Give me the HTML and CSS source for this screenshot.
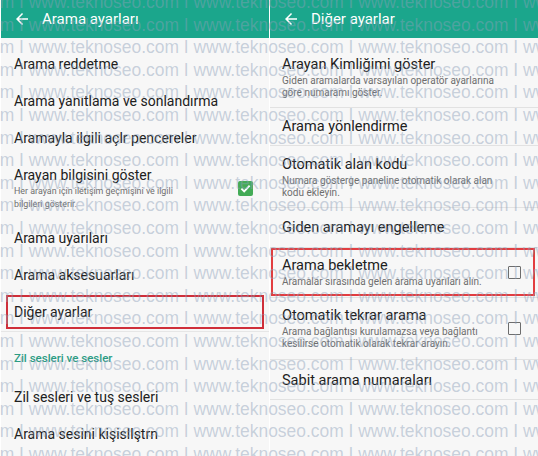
FILE: index.html
```html
<!DOCTYPE html>
<html lang="tr">
<head>
    <meta charset="UTF-8">
    <meta name="viewport" content="width=device-width, initial-scale=1.0">
    <title>Arama ayarları</title>
    <link rel="stylesheet" href="styles.css">
</head>
<body>
    <div class="shots">
        <!-- stock dialer: call settings -->
        <section class="screen screen-left">
            <header class="appbar">
                <svg class="back" viewBox="0 0 24 24"><path d="M20 11H7.83l5.59-5.59L12 4l-8 8 8 8 1.41-1.41L7.83 13H20v-2z"/></svg>
                <h1>Arama ayarları</h1>
            </header>
            <ul class="prefs">
                <li class="pref"><span class="pref-title">Arama reddetme</span></li>
                <li class="pref"><span class="pref-title">Arama yanıtlama ve sonlandırma</span></li>
                <li class="pref"><span class="pref-title">Aramayla ilgili açlr pencereler</span></li>
                <li class="pref">
                    <div class="pref-text">
                        <span class="pref-title">Arayan bilgisini göster</span>
                        <span class="pref-summary">Her arayan için iletişim geçmişini ve ilgili<br>bilgileri gösterir.</span>
                    </div>
                    <span class="checkbox checked">
                        <svg viewBox="0 0 16 16"><path d="M3.6 8.2l3 3 5.8-6.2" /></svg>
                    </span>
                </li>
                <li class="pref"><span class="pref-title">Arama uyarıları</span></li>
                <li class="pref"><span class="pref-title">Arama aksesuarları</span></li>
                <li class="pref marked"><span class="pref-title">Diğer ayarlar</span></li>
                <li class="category">Zil sesleri ve sesler</li>
                <li class="pref"><span class="pref-title">Zil sesleri ve tuş sesleri</span></li>
                <li class="pref"><span class="pref-title">Arama sesini kişisllştrn</span></li>
            </ul>
        </section>

        <!-- samsung dialer: other settings -->
        <section class="screen screen-right">
            <header class="appbar">
                <svg class="back" viewBox="0 0 24 24"><path d="M20 11H7.83l5.59-5.59L12 4l-8 8 8 8 1.41-1.41L7.83 13H20v-2z"/></svg>
                <h1>Diğer ayarlar</h1>
            </header>
            <ul class="prefs">
                <li class="pref">
                    <div class="pref-text">
                        <span class="pref-title">Arayan Kimliğimi göster</span>
                        <span class="pref-summary">Giden aramalarda varsayılan operatör ayarlarına<br>göre numaramı göster.</span>
                    </div>
                </li>
                <li class="pref"><span class="pref-title">Arama yönlendirme</span></li>
                <li class="pref">
                    <div class="pref-text">
                        <span class="pref-title">Otomatik alan kodu</span>
                        <span class="pref-summary">Numara gösterge paneline otomatik olarak alan<br>kodu ekleyin.</span>
                    </div>
                </li>
                <li class="pref"><span class="pref-title">Giden aramayı engelleme</span></li>
                <li class="pref marked">
                    <div class="pref-text">
                        <span class="pref-title">Arama bekletme</span>
                        <span class="pref-summary">Aramalar sırasında gelen arama uyarıları alın.</span>
                    </div>
                    <span class="checkbox"></span>
                </li>
                <li class="pref">
                    <div class="pref-text">
                        <span class="pref-title">Otomatik tekrar arama</span>
                        <span class="pref-summary">Arama bağlantısı kurulamazsa veya bağlantı<br>kesilirse otomatik olarak tekrar arayın.</span>
                    </div>
                    <span class="checkbox"></span>
                </li>
                <li class="pref"><span class="pref-title">Sabit arama numaraları</span></li>
            </ul>
        </section>
    </div>

    <div class="watermark"><div class="watermark-rows" id="watermark"></div></div>

    <script>
        // repeat the site stamp over the whole picture
        const mark = document.getElementById('watermark');
        const line = 'www.teknoseo.com I '.repeat(5);
        for (let i = 0; i < 21; i++) {
            const row = document.createElement('div');
            row.textContent = line;
            mark.appendChild(row);
        }
    </script>
</body>
</html>
```

FILE: styles.css
```css
body {
    margin: 0;
    background: #fff;
    font-family: Roboto, "Noto Sans", sans-serif;
    width: 538px;
    height: 456px;
    overflow: hidden;
    position: relative;
}
.shots {
    display: flex;
    gap: 1px;
    padding-left: 1px;
    height: 456px;
}
.screen {
    background: #f7f7f7;
    width: 268px;
    display: flex;
    flex-direction: column;
}
.appbar {
    height: 38px;
    background: #1ba68c;
    display: flex;
    align-items: center;
    padding-left: 12px;
    flex-shrink: 0;
}
.back {
    width: 18px;
    height: 18px;
    fill: #fff;
}
.appbar h1 {
    margin: 0 0 0 11px;
    font-size: 15px;
    font-weight: 400;
    color: #fff;
}
.prefs {
    list-style: none;
    margin: 0;
    padding: 8px 0 0;
}
.pref {
    display: flex;
    align-items: center;
    position: relative;
}
.pref-text {
    flex: 1;
    display: flex;
    flex-direction: column;
}
.pref-title {
    color: #202020;
}
.pref-summary {
    color: #6e6e6e;
}

/* left screen */
.screen-left .pref {
    padding: 9px 16px 9px 13px;
}
.screen-left .pref-title {
    font-size: 14px;
    line-height: 19px;
}
.screen-left .pref-summary {
    font-size: 8.9px;
    line-height: 13px;
}
.screen-left .marked::after {
    content: "";
    position: absolute;
    top: 1px;
    bottom: 2px;
    left: 5px;
    right: 5px;
    border: 2px solid #cf2f3a;
}
.category {
    border-top: 1px solid #e6e6e6;
    padding: 20px 13px 14px;
    font-size: 11.5px;
    line-height: 13px;
    font-weight: 500;
    color: #2c9c84;
}

/* right screen */
.screen-right .pref {
    padding: 8.5px 17px 8.5px 12px;
    border-bottom: 1px solid #e2e2e2;
}
.screen-right .pref-title {
    font-size: 14.5px;
    line-height: 20px;
}
.screen-right .pref-summary {
    font-size: 10px;
    line-height: 12px;
}
.screen-right .pref:nth-child(4) {
    padding-top: 10px;
}
.screen-right .pref:last-child {
    padding-top: 11px;
}
.screen-right .marked::after {
    content: "";
    position: absolute;
    top: 0;
    bottom: 1px;
    left: 1px;
    right: 3px;
    border: 2px solid #e23d40;
}

.checkbox {
    width: 11px;
    height: 11px;
    border: 1.5px solid #6d6d6d;
    border-radius: 1px;
    flex-shrink: 0;
}
.checkbox.checked {
    width: 15px;
    height: 15px;
    border: none;
    border-radius: 2px;
    background: #43ab56;
}
.checkbox svg {
    display: block;
    width: 15px;
    height: 15px;
    fill: none;
    stroke: #fff;
    stroke-width: 2;
}

/* site stamp laid over both screens */
.watermark {
    position: absolute;
    top: 0;
    left: 0;
    right: 0;
    bottom: 0;
    overflow: hidden;
    pointer-events: none;
}
.watermark-rows {
    margin: -9px 0 0 -136px;
    font-family: "Liberation Sans", Arial, sans-serif;
    font-size: 17.45px;
    line-height: 22.6px;
    white-space: pre;
    color: rgba(140, 160, 185, 0.45);
}
```
